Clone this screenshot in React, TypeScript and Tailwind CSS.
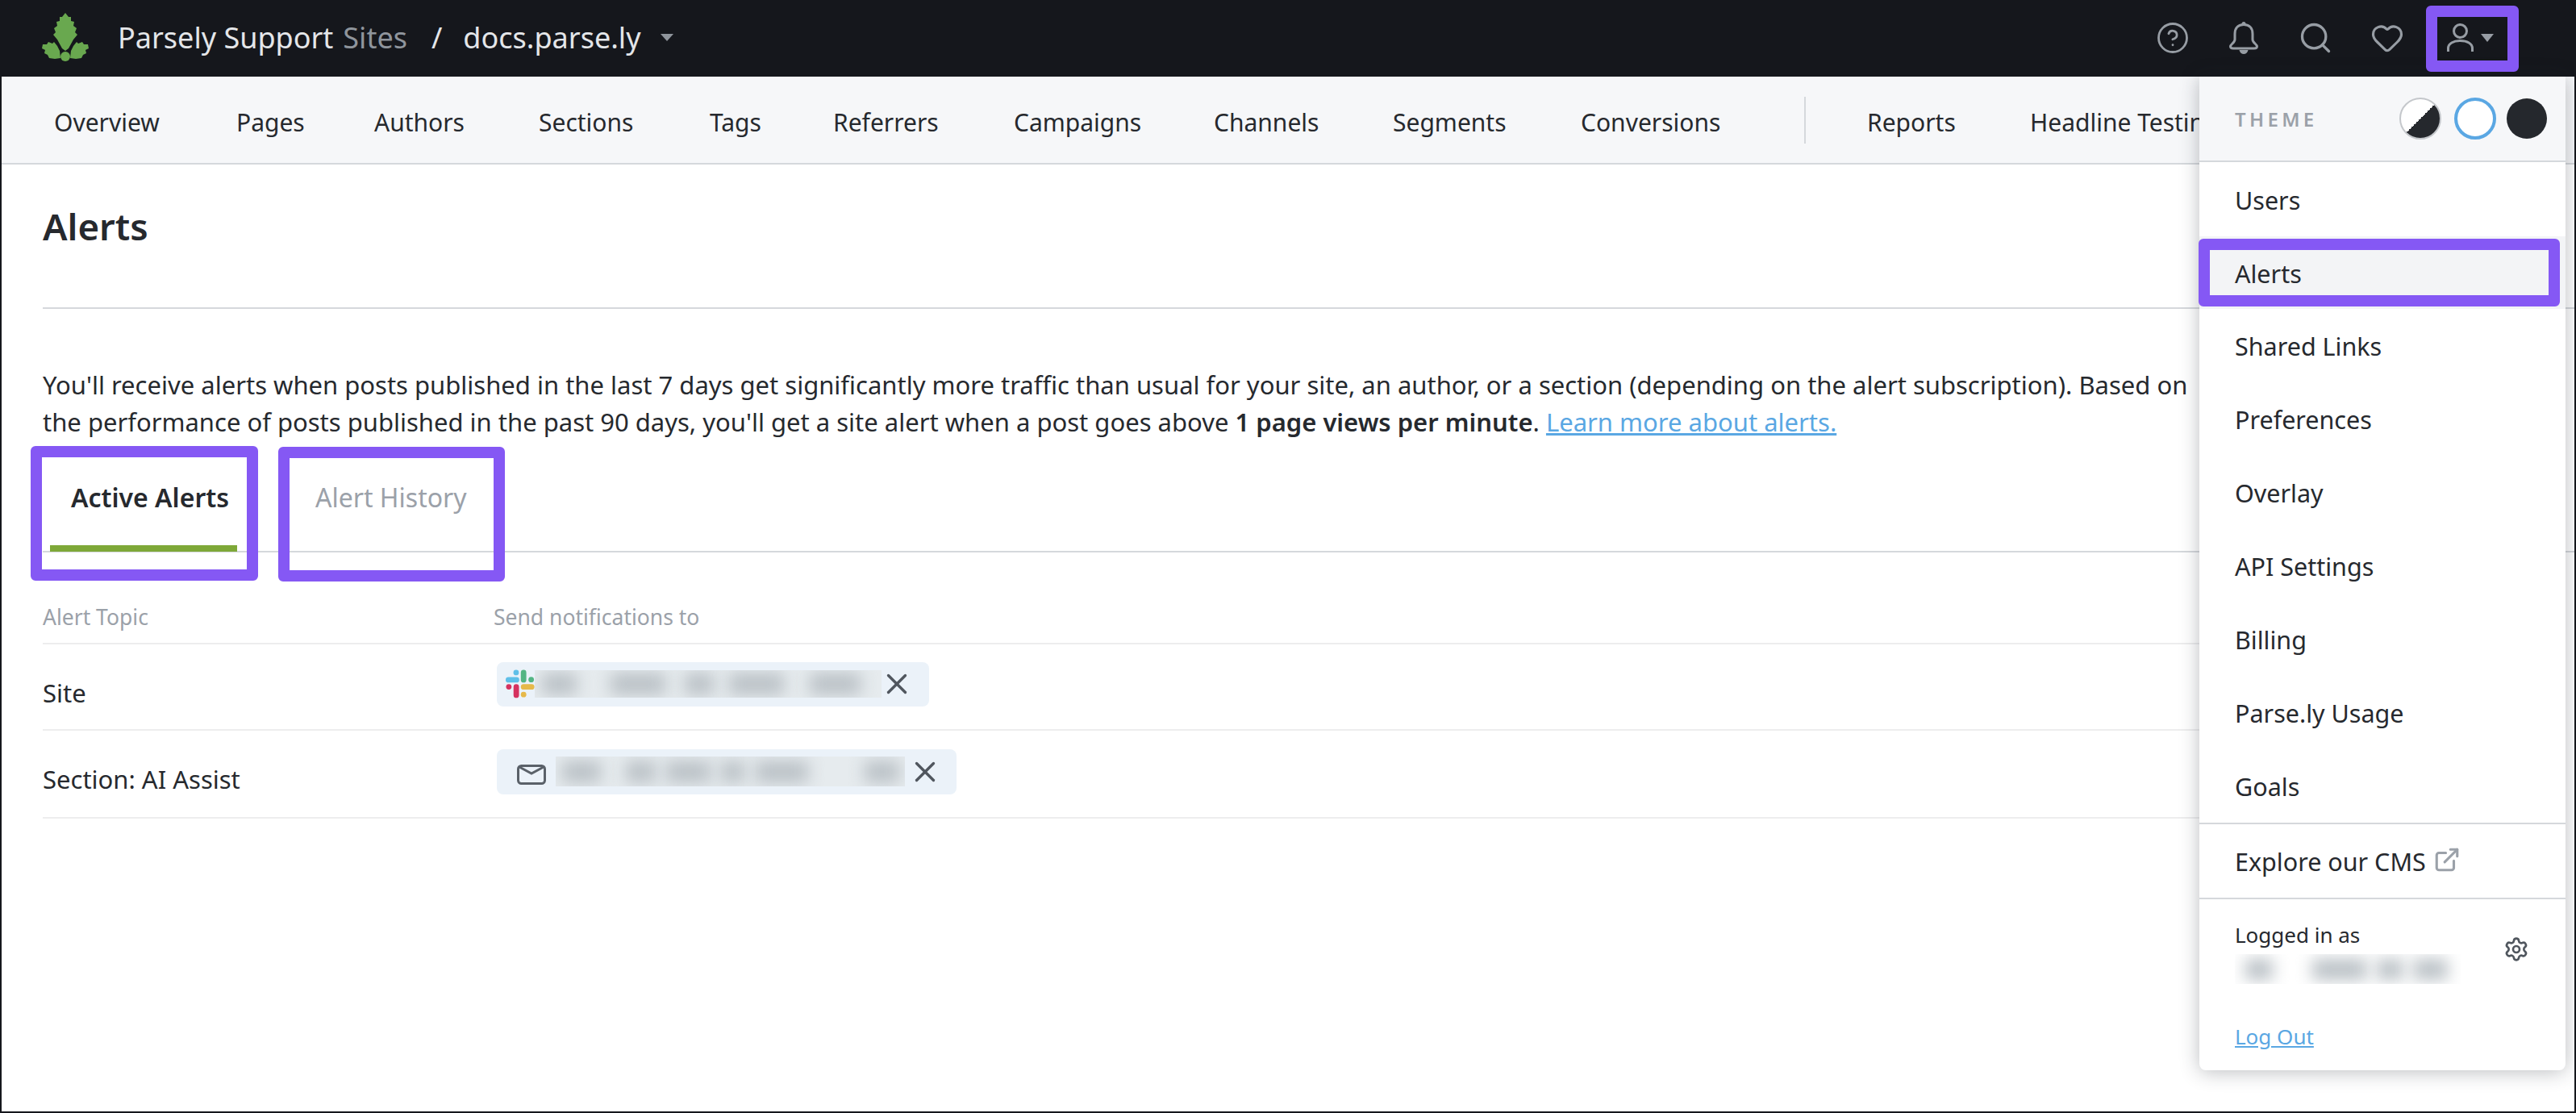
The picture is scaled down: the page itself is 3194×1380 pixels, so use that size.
import React from "react";
import { CircleHelp, ExternalLink, Heart, Search, Settings, X } from "lucide-react";

const navItems = [
  { label: "Overview", cls: "w-[226px]" },
  { label: "Pages", cls: "w-[171px]" },
  { label: "Authors", cls: "w-[204px]" },
  { label: "Sections", cls: "w-[212px]" },
  { label: "Tags", cls: "w-[153px]" },
  { label: "Referrers", cls: "w-[224px]" },
  { label: "Campaigns", cls: "w-[248px]" },
  { label: "Channels", cls: "w-[222px]" },
  { label: "Segments", cls: "w-[233px]" },
  { label: "Conversions", cls: "w-[277px]" },
];

const menuItems = ["Shared Links", "Preferences", "Overlay", "API Settings", "Billing", "Parse.ly Usage", "Goals"];

function Logo() {
  return (
    <svg width="58" height="62" viewBox="0 0 58 62" className="shrink-0">
      <g fill="#69a84f">
        <path d="M29 0 L33 5 L36 5 L36 10 L40 11 L39 16 L43 19 L41 24 L44 27 L39 33 L33 44 L29 47 L25 44 L19 33 L14 27 L17 24 L15 19 L19 16 L18 11 L22 10 L22 5 L25 5 Z" />
        <path d="M1 39 L6 39 L8 36 L13 38 L15 36 L19 41 L22 47 L23 56 L16 57 L9 56 L7 52 L3 50 L4 46 L0 44 Z" />
        <path d="M57 39 L52 39 L50 36 L45 38 L43 36 L39 41 L36 47 L35 56 L42 57 L49 56 L51 52 L55 50 L54 46 L58 44 Z" />
        <circle cx="29" cy="54" r="6" />
      </g>
    </svg>
  );
}

function BellIcon() {
  return (
    <svg width="36" height="40" viewBox="0 0 36 40" fill="none" stroke="#979da4" strokeWidth="3" className="shrink-0">
      <path d="M18 3.5 C10 3.5 7 9 7 15 V22 C7 26 1.5 28 1.5 30.5 Q1.5 33 5 33 H31 Q34.5 33 34.5 30.5 C34.5 28 29 26 29 22 V15 C29 9 26 3.5 18 3.5 Z" />
      <circle cx="18" cy="2.5" r="2.5" fill="#979da4" stroke="none" />
      <path d="M12.5 35 H23.5 C23 38 20.5 40 18 40 C15.5 40 13 38 12.5 35 Z" fill="#979da4" stroke="none" />
    </svg>
  );
}

function UserIcon() {
  return (
    <svg width="33" height="36" viewBox="0 0 33 36" fill="none" stroke="#979da4" strokeWidth="3" className="shrink-0">
      <circle cx="16.5" cy="9.5" r="8" />
      <path d="M1.5 35 V31 C1.5 25 8 21.5 16.5 21.5 C25 21.5 31.5 25 31.5 31 V35" />
    </svg>
  );
}

function SlackIcon() {
  return (
    <svg width="36" height="36" viewBox="0 0 37 36" className="shrink-0">
      <rect x="0" y="9.3" width="17.3" height="7" rx="3.5" fill="#5fbfe8" />
      <circle cx="13.3" cy="3.5" r="3.5" fill="#5fbfe8" />
      <rect x="19.3" y="0" width="7" height="16.3" rx="3.5" fill="#53b583" />
      <circle cx="32.5" cy="12.5" r="3.5" fill="#53b583" />
      <circle cx="4" cy="21.7" r="3.5" fill="#d5325f" />
      <rect x="10" y="18.3" width="7" height="17.5" rx="3.5" fill="#d5325f" />
      <rect x="19.3" y="18.3" width="17.3" height="7" rx="3.5" fill="#e6b94a" />
      <circle cx="22.8" cy="31.5" r="3.5" fill="#e6b94a" />
    </svg>
  );
}

function MailIcon() {
  return (
    <svg width="36" height="25" viewBox="0 0 36 25" fill="none" stroke="#5a6169" strokeWidth="3" className="mt-[8px] shrink-0">
      <rect x="1.5" y="1.5" width="33" height="22" rx="4" />
      <path d="M3 3 L18 11 L33 3" />
    </svg>
  );
}

// redacted address: soft grey smudges on a slightly lighter strip
function Smudge({ bars, className }: { bars: string[]; className: string }) {
  return (
    <div className={`flex items-center overflow-hidden ${className}`}>
      {bars.map((b, i) => (
        <div key={i} className={`h-[26px] shrink-0 bg-[#b9c0c5] blur-[10px] ${b}`} />
      ))}
    </div>
  );
}

function Highlight({ className }: { className: string }) {
  return <div className={`pointer-events-none absolute rounded-[6px] border-[14px] border-[#8558f4] ${className}`} />;
}

export default function App() {
  return (
    <div className="relative h-[1380px] w-[3194px] overflow-hidden border-x-2 border-b-2 border-[#15171c] bg-white font-['Noto_Sans',sans-serif] text-[31px] text-[#26292e]">
      {/* Top bar */}
      <header className="flex h-[95px] items-center bg-[#15171c] pb-[2px] pl-[50px] pr-[100px]">
        <Logo />
        <span className="ml-[36px] text-[36px] text-[#e4e6e9]">Parsely Support</span>
        <span className="ml-[12px] text-[36px] text-[#8f959c]">Sites</span>
        <span className="ml-[30px] text-[36px] text-[#e4e6e9]">/</span>
        <span className="ml-[26px] text-[36px] text-[#e4e6e9]">docs.parse.ly</span>
        <div className="ml-[24px] h-0 w-0 border-x-[8px] border-t-[9px] border-x-transparent border-t-[#8f959c]" />
        <div className="ml-auto flex items-center text-[#979da4]">
          <CircleHelp size={42} strokeWidth={1.6} />
          <div className="ml-[49px]">
            <BellIcon />
          </div>
          <Search size={44} strokeWidth={1.8} className="ml-[49px]" />
          <Heart size={42} strokeWidth={1.8} className="ml-[46px]" />
          <div className="ml-[53px]">
            <UserIcon />
          </div>
          <div className="ml-[9px] h-0 w-0 border-x-[8px] border-t-[10px] border-x-transparent border-t-[#979da4]" />
        </div>
      </header>

      {/* Section nav */}
      <nav className="flex h-[109px] items-center whitespace-nowrap border-b-2 border-[#d5d8dc] bg-[#f6f7f9] pl-[65px] pt-[6px] text-[30px]">
        {navItems.map((n) => (
          <span key={n.label} className={n.cls}>
            {n.label}
          </span>
        ))}
        <div className="mb-[6px] h-[58px] w-[2px] bg-[#d5d8dc]" />
        <span className="ml-[76px] w-[202px]">Reports</span>
        <span>Headline Testing</span>
      </nav>

      {/* Page body */}
      <main className="pl-[51px]">
        <div className="flex h-[179px] items-center border-b-2 border-[#d5d8dc] pb-[24px]">
          <h1 className="text-[45.5px] font-semibold">Alerts</h1>
        </div>
        <p className="mt-[71px] whitespace-nowrap leading-[46px]">
          You'll receive alerts when posts published in the last 7 days get significantly more traffic than usual for your site, an author, or a section (depending on the alert subscription). Based on
          <br />
          the performance of posts published in the past 90 days, you'll get a site alert when a post goes above <b className="font-semibold">1 page views per minute</b>.{" "}
          <span className="text-[#5aa7e3] underline">Learn more about alerts.</span>
        </p>

        {/* Tabs */}
        <div className="flex h-[139px] items-start border-b-2 border-[#d5d8dc]">
          <div className="ml-[9px] flex h-[138px] w-[232px] flex-col items-center justify-start border-b-[8px] border-[#7ea838] pl-[16px] pt-[47px] text-[32px] font-semibold">
            Active Alerts
          </div>
          <div className="ml-[97px] pt-[47px] text-[32px] text-[#9ba1a9]">Alert History</div>
        </div>

        {/* Alerts table */}
        <div className="mr-[53px]">
          <div className="flex h-[114px] items-center border-b-2 border-[#ededee] pt-[50px] text-[26.5px] text-[#9ba1a9]">
            <span className="w-[559px]">Alert Topic</span>
            <span>Send notifications to</span>
          </div>
          <div className="flex h-[107px] items-center border-b-2 border-[#ededee]">
            <span className="w-[563px] pt-[16px]">Site</span>
            <div className="mb-[7px] flex h-[55px] w-[536px] items-center rounded-[8px] bg-[#ebf2f9] pl-[11px]">
              <SlackIcon />
              <Smudge className="h-[34px] w-[430px] bg-[#e6ebee]" bars={["ml-[9px] w-[43px]", "ml-[42px] w-[68px]", "ml-[24px] w-[36px]", "ml-[19px] w-[68px]", "ml-[32px] w-[63px]"]} />
              <X size={42} strokeWidth={1.9} className="ml-[-2px] shrink-0 text-[#50565e]" />
            </div>
          </div>
          <div className="flex h-[109px] items-center border-b-2 border-[#ededee]">
            <span className="w-[563px] pt-[14px]">Section: AI Assist</span>
            <div className="mb-[6px] flex h-[56px] w-[570px] items-center rounded-[8px] bg-[#ebf2f9] pl-[25px]">
              <MailIcon />
              <Smudge className="ml-[12px] h-[37px] w-[433px] bg-[#e6ebee]" bars={["ml-[8px] w-[48px]", "ml-[31px] w-[37px]", "ml-[13px] w-[55px]", "ml-[13px] w-[29px]", "ml-[14px] w-[65px]", "ml-[70px] w-[43px]"]} />
              <X size={42} strokeWidth={1.9} className="ml-[4px] shrink-0 text-[#50565e]" />
            </div>
          </div>
        </div>
      </main>

      {/* Account dropdown */}
      <div className="absolute left-[2725px] top-[95px] flex h-[1232px] w-[454px] flex-col rounded-b-[8px] bg-white text-[30.5px] shadow-[0_2px_24px_rgba(30,35,45,0.3)]">
        <div className="flex h-[106px] shrink-0 items-center border-b-2 border-[#d5d8dc] bg-[#f6f7f9] pl-[44px] pr-[23px]">
          <span className="pt-[2px] text-[24px] font-semibold tracking-[0.18em] text-[#9ba1a9]">THEME</span>
          <div className="ml-auto h-[52px] w-[52px] rounded-full border-2 border-[#c4c7cb] bg-[linear-gradient(135deg,#ffffff_50%,#25282d_50%)]" />
          <div className="ml-[16px] h-[52px] w-[52px] rounded-full border-[4px] border-[#5aa7e3] bg-white" />
          <div className="ml-[13px] h-[50px] w-[50px] rounded-full bg-[#25282d]" />
        </div>
        <div className="flex h-[92px] shrink-0 items-center pl-[44px] pt-[3px]">Users</div>
        <div className="flex h-[90px] shrink-0 items-center bg-[#f3f4f6] pl-[44px] pt-[3px]">Alerts</div>
        {menuItems.map((m) => (
          <div key={m} className="flex h-[91px] shrink-0 items-center pl-[44px] pt-[3px]">
            {m}
          </div>
        ))}
        <div className="flex h-[95px] shrink-0 items-center gap-[9px] border-y-2 border-[#d5d8dc] pl-[44px] pt-[3px]">
          Explore our CMS
          <ExternalLink size={34} strokeWidth={2.2} className="mb-[6px] text-[#9ba1a9]" />
        </div>
        <div className="relative flex-1 pl-[44px] pt-[25px] text-[26px]">
          <div>Logged in as</div>
          <Smudge className="mt-[4px] h-[37px] w-[280px]" bars={["ml-[13px] w-[34px]", "ml-[49px] w-[68px]", "ml-[12px] w-[33px]", "ml-[12px] w-[43px]"]} />
          <Settings size={32} strokeWidth={2} className="absolute left-[377px] top-[46px] text-[#50565e]" />
          <div className="mt-[46px] text-[#5aa7e3] underline">Log Out</div>
        </div>
      </div>

      {/* Purple call-outs */}
      <Highlight className="left-[3006px] top-[7px] h-[82px] w-[115px]" />
      <Highlight className="left-[2724px] top-[296px] h-[84px] w-[448px]" />
      <Highlight className="left-[36px] top-[553px] h-[167px] w-[282px]" />
      <Highlight className="left-[343px] top-[554px] h-[167px] w-[281px]" />
    </div>
  );
}
